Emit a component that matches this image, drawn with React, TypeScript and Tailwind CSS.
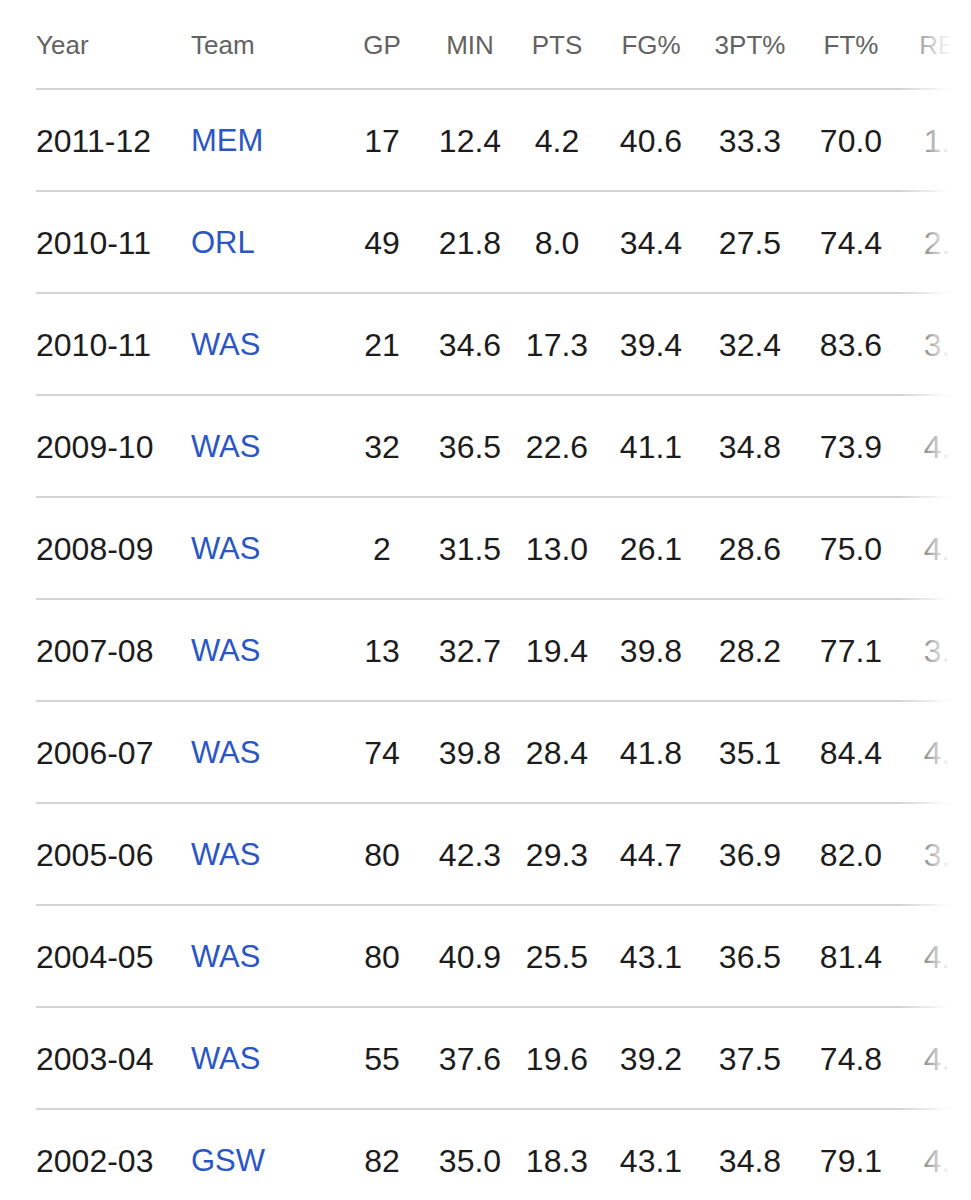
import React from "react";

type Row = {
  year: string;
  team: string;
  gp: string;
  min: string;
  pts: string;
  fg: string;
  tp: string;
  ft: string;
  reb: string;
};

const rows: Row[] = [
  { year: "2011-12", team: "MEM", gp: "17", min: "12.4", pts: "4.2", fg: "40.6", tp: "33.3", ft: "70.0", reb: "1.7" },
  { year: "2010-11", team: "ORL", gp: "49", min: "21.8", pts: "8.0", fg: "34.4", tp: "27.5", ft: "74.4", reb: "2.4" },
  { year: "2010-11", team: "WAS", gp: "21", min: "34.6", pts: "17.3", fg: "39.4", tp: "32.4", ft: "83.6", reb: "3.3" },
  { year: "2009-10", team: "WAS", gp: "32", min: "36.5", pts: "22.6", fg: "41.1", tp: "34.8", ft: "73.9", reb: "4.2" },
  { year: "2008-09", team: "WAS", gp: "2", min: "31.5", pts: "13.0", fg: "26.1", tp: "28.6", ft: "75.0", reb: "4.5" },
  { year: "2007-08", team: "WAS", gp: "13", min: "32.7", pts: "19.4", fg: "39.8", tp: "28.2", ft: "77.1", reb: "3.9" },
  { year: "2006-07", team: "WAS", gp: "74", min: "39.8", pts: "28.4", fg: "41.8", tp: "35.1", ft: "84.4", reb: "4.6" },
  { year: "2005-06", team: "WAS", gp: "80", min: "42.3", pts: "29.3", fg: "44.7", tp: "36.9", ft: "82.0", reb: "3.5" },
  { year: "2004-05", team: "WAS", gp: "80", min: "40.9", pts: "25.5", fg: "43.1", tp: "36.5", ft: "81.4", reb: "4.7" },
  { year: "2003-04", team: "WAS", gp: "55", min: "37.6", pts: "19.6", fg: "39.2", tp: "37.5", ft: "74.8", reb: "4.6" },
  { year: "2002-03", team: "GSW", gp: "82", min: "35.0", pts: "18.3", fg: "43.1", tp: "34.8", ft: "79.1", reb: "4.7" },
];

// column widths, measured off the screenshot
const cols = {
  year: "w-[155px] text-left",
  team: "w-[149px] text-left",
  gp: "w-[84px] text-center",
  min: "w-[92px] text-center",
  pts: "w-[82px] text-center",
  fg: "w-[106px] text-center",
  tp: "w-[92px] text-center",
  ft: "w-[110px] text-center",
  reb: "w-[80px] text-center",
};

const StatRow = ({ row }: { row: Row }) => {
  return (
    <div className="flex items-center h-[102px] pt-[2px] border-b-2 border-[#d4d4d4] text-[32px] text-[#1c1c1c] shrink-0">
      <div className={cols.year}>{row.year}</div>
      <div className={`${cols.team} text-[31px] text-[#2a56c6]`}>{row.team}</div>
      <div className={cols.gp}>{row.gp}</div>
      <div className={cols.min}>{row.min}</div>
      <div className={cols.pts}>{row.pts}</div>
      <div className={cols.fg}>{row.fg}</div>
      <div className={cols.tp}>{row.tp}</div>
      <div className={cols.ft}>{row.ft}</div>
      <div className={cols.reb}>{row.reb}</div>
    </div>
  );
};

export default function App() {
  return (
    <div
      className="relative w-[971px] h-[1200px] overflow-hidden bg-white"
      style={{ fontFamily: '"Liberation Sans", Arial, sans-serif' }}
    >
      <div className="pl-[36px] flex flex-col w-[1100px]">
        <div className="flex items-center h-[90px] pt-[2px] border-b-2 border-[#d4d4d4] text-[26px] text-[#626262] shrink-0">
          <div className={cols.year}>Year</div>
          <div className={cols.team}>Team</div>
          <div className={cols.gp}>GP</div>
          <div className={cols.min}>MIN</div>
          <div className={cols.pts}>PTS</div>
          <div className={cols.fg}>FG%</div>
          <div className={cols.tp}>3PT%</div>
          <div className={cols.ft}>FT%</div>
          <div className={cols.reb}>REB</div>
        </div>
        {rows.map((row, i) => (
          <StatRow key={i} row={row} />
        ))}
      </div>
      {/* scroll fade on the right edge */}
      <div className="absolute top-0 right-0 bottom-0 w-[72px] bg-[linear-gradient(to_right,rgba(255,255,255,0)_0px,rgba(255,255,255,0.55)_28px,rgba(255,255,255,0.85)_42px,#ffffff_54px)]" />
    </div>
  );
}
